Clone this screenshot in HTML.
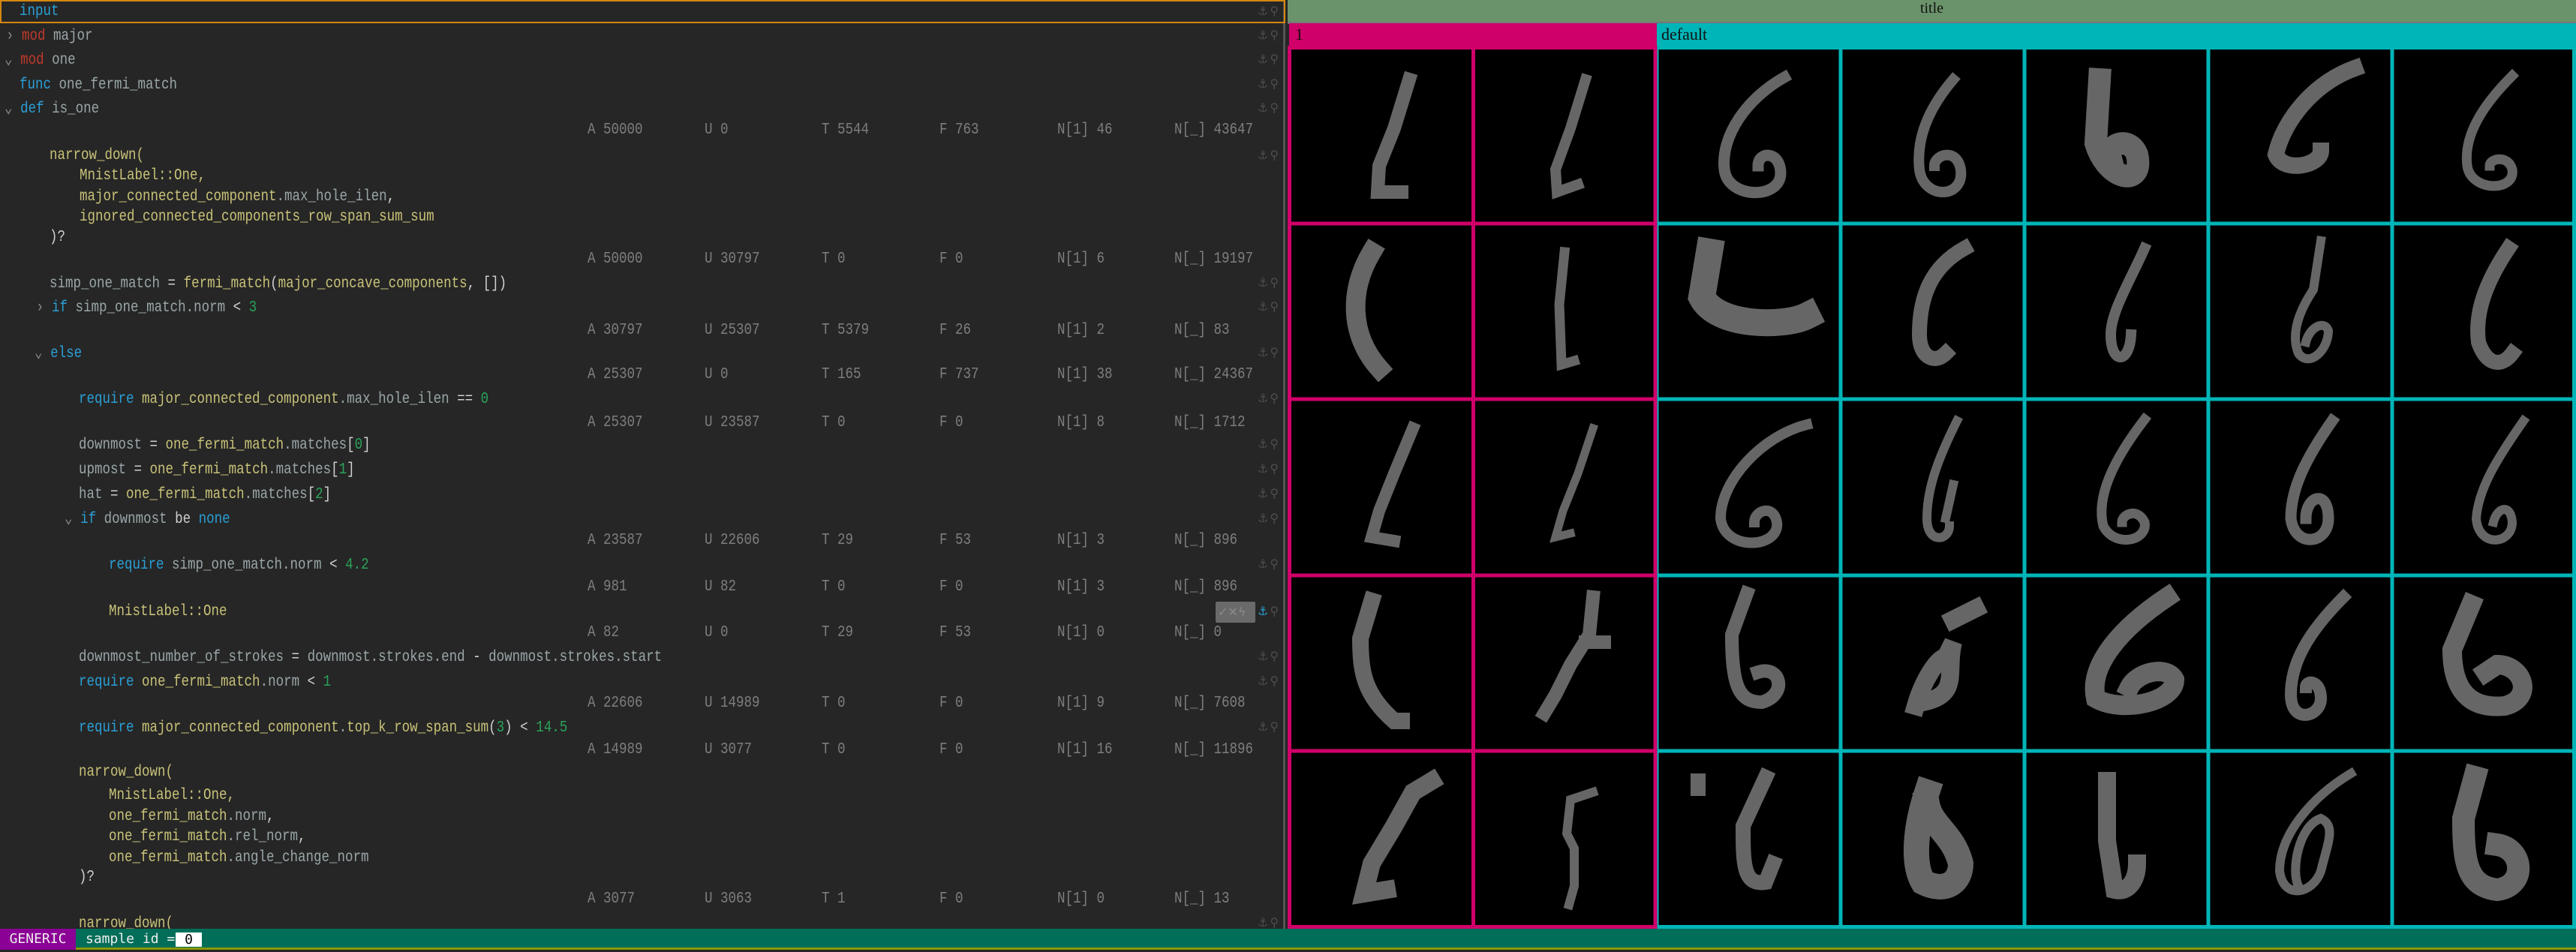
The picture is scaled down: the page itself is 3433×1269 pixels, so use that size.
<!DOCTYPE html>
<html><head><meta charset="utf-8"><style>
*{margin:0;padding:0;box-sizing:border-box}
body{width:3433px;height:1269px;background:#262626;position:relative;overflow:hidden;font-family:"Liberation Mono","DejaVu Sans Mono",monospace}
#left{position:absolute;left:0;top:0;width:1713px;height:1238px;background:#262626;border-right:3px solid #555}
.l{position:absolute;height:26px;line-height:26px;font-size:17.5px;white-space:pre;color:#9aa6a8;transform:scaleY(1.2);transform-origin:left center}
.k{color:#2a9fd6}.r{color:#c0392b}.y{color:#c8c278}.g{color:#2aa35a}.w{color:#d0d0d0}.ch{color:#8a8a8a}
.s{position:absolute;height:26px;line-height:26px;font-size:17.5px;color:#7e7e7e;white-space:pre;transform:scaleY(1.2)}
.ic{position:absolute;left:1676px;width:36px;height:22px;color:#4e4e4e;font-size:16px;line-height:22px;font-family:"DejaVu Sans",sans-serif;letter-spacing:2px}
#title{position:absolute;left:1716px;top:0;width:1717px;height:29px;background:#6b936b;text-align:center;font:20px "Liberation Serif",serif;line-height:22px;color:#111}
#bar{position:absolute;left:0;top:1238px;width:3433px;height:28px;background:#006e58;border-bottom:3px solid #8a9a00}
</style></head><body>
<div id="left">
<div style="position:absolute;left:0;top:0;width:1713px;height:31px;border:2px solid #d4880f"></div>
<div class="l k" style="left:26px;top:2px">input</div>
<div class="l" style="left:8px;top:35px"><span class="ch">›</span> <span class="r">mod</span> major</div>
<div class="l" style="left:6px;top:67px"><span class="ch">⌄</span> <span class="r">mod</span> one</div>
<div class="l" style="left:26px;top:100px"><span class="k">func</span> one_fermi_match</div>
<div class="l" style="left:6px;top:132px"><span class="ch">⌄</span> <span class="k">def</span> is_one</div>
<div class="l y" style="left:66px;top:194px">narrow_down(</div>
<div class="l y" style="left:106px;top:221px">MnistLabel::One,</div>
<div class="l y" style="left:106px;top:249px">major_connected_component<span style="color:#9aa6a8">.max_hole_ilen</span><span class="w">,</span></div>
<div class="l y" style="left:106px;top:276px">ignored_connected_components_row_span_sum_sum</div>
<div class="l w" style="left:66px;top:303px">)?</div>
<div class="l" style="left:66px;top:365px">simp_one_match <span class="w">=</span> <span class="y">fermi_match</span><span class="w">(</span><span class="y">major_concave_components</span><span class="w">, [])</span></div>
<div class="l" style="left:48px;top:397px"><span class="ch">›</span> <span class="k">if</span> simp_one_match.norm <span class="w">&lt;</span> <span class="g">3</span></div>
<div class="l" style="left:46px;top:458px"><span class="ch">⌄</span> <span class="k">else</span></div>
<div class="l" style="left:105px;top:519px"><span class="k">require</span> <span class="y">major_connected_component</span>.max_hole_ilen <span class="w">==</span> <span class="g">0</span></div>
<div class="l" style="left:105px;top:580px">downmost <span class="w">=</span> <span class="y">one_fermi_match</span>.matches<span class="w">[</span><span class="g">0</span><span class="w">]</span></div>
<div class="l" style="left:105px;top:613px">upmost <span class="w">=</span> <span class="y">one_fermi_match</span>.matches<span class="w">[</span><span class="g">1</span><span class="w">]</span></div>
<div class="l" style="left:105px;top:646px">hat <span class="w">=</span> <span class="y">one_fermi_match</span>.matches<span class="w">[</span><span class="g">2</span><span class="w">]</span></div>
<div class="l" style="left:86px;top:679px"><span class="ch">⌄</span> <span class="k">if</span> downmost <span class="w">be</span> <span class="k">none</span></div>
<div class="l" style="left:145px;top:740px"><span class="k">require</span> simp_one_match.norm <span class="w">&lt;</span> <span class="g">4.2</span></div>
<div class="l y" style="left:145px;top:802px">MnistLabel::One</div>
<div class="l" style="left:105px;top:863px">downmost_number_of_strokes <span class="w">=</span> downmost.strokes.end <span class="w">-</span> downmost.strokes.start</div>
<div class="l" style="left:105px;top:896px"><span class="k">require</span> <span class="y">one_fermi_match</span>.norm <span class="w">&lt;</span> <span class="g">1</span></div>
<div class="l" style="left:105px;top:957px"><span class="k">require</span> <span class="y">major_connected_component</span>.<span class="y">top_k_row_span_sum</span><span class="w">(</span><span class="g">3</span><span class="w">) &lt;</span> <span class="g">14.5</span></div>
<div class="l y" style="left:105px;top:1016px">narrow_down(</div>
<div class="l y" style="left:145px;top:1047px">MnistLabel::One,</div>
<div class="l" style="left:145px;top:1075px"><span class="y">one_fermi_match</span>.norm<span class="w">,</span></div>
<div class="l" style="left:145px;top:1102px"><span class="y">one_fermi_match</span>.rel_norm<span class="w">,</span></div>
<div class="l" style="left:145px;top:1130px"><span class="y">one_fermi_match</span>.angle_change_norm</div>
<div class="l w" style="left:105px;top:1156px">)?</div>
<div class="l y" style="left:105px;top:1218px">narrow_down(</div>

<div class="s" style="left:783px;top:160px">A 50000</div><div class="s" style="left:939px;top:160px">U 0</div><div class="s" style="left:1095px;top:160px">T 5544</div><div class="s" style="left:1252px;top:160px">F 763</div><div class="s" style="left:1409px;top:160px">N[1] 46</div><div class="s" style="left:1565px;top:160px">N[_] 43647</div>
<div class="s" style="left:783px;top:332px">A 50000</div><div class="s" style="left:939px;top:332px">U 30797</div><div class="s" style="left:1095px;top:332px">T 0</div><div class="s" style="left:1252px;top:332px">F 0</div><div class="s" style="left:1409px;top:332px">N[1] 6</div><div class="s" style="left:1565px;top:332px">N[_] 19197</div>
<div class="s" style="left:783px;top:427px">A 30797</div><div class="s" style="left:939px;top:427px">U 25307</div><div class="s" style="left:1095px;top:427px">T 5379</div><div class="s" style="left:1252px;top:427px">F 26</div><div class="s" style="left:1409px;top:427px">N[1] 2</div><div class="s" style="left:1565px;top:427px">N[_] 83</div>
<div class="s" style="left:783px;top:486px">A 25307</div><div class="s" style="left:939px;top:486px">U 0</div><div class="s" style="left:1095px;top:486px">T 165</div><div class="s" style="left:1252px;top:486px">F 737</div><div class="s" style="left:1409px;top:486px">N[1] 38</div><div class="s" style="left:1565px;top:486px">N[_] 24367</div>
<div class="s" style="left:783px;top:550px">A 25307</div><div class="s" style="left:939px;top:550px">U 23587</div><div class="s" style="left:1095px;top:550px">T 0</div><div class="s" style="left:1252px;top:550px">F 0</div><div class="s" style="left:1409px;top:550px">N[1] 8</div><div class="s" style="left:1565px;top:550px">N[_] 1712</div>
<div class="s" style="left:783px;top:707px">A 23587</div><div class="s" style="left:939px;top:707px">U 22606</div><div class="s" style="left:1095px;top:707px">T 29</div><div class="s" style="left:1252px;top:707px">F 53</div><div class="s" style="left:1409px;top:707px">N[1] 3</div><div class="s" style="left:1565px;top:707px">N[_] 896</div>
<div class="s" style="left:783px;top:769px">A 981</div><div class="s" style="left:939px;top:769px">U 82</div><div class="s" style="left:1095px;top:769px">T 0</div><div class="s" style="left:1252px;top:769px">F 0</div><div class="s" style="left:1409px;top:769px">N[1] 3</div><div class="s" style="left:1565px;top:769px">N[_] 896</div>
<div class="s" style="left:783px;top:830px">A 82</div><div class="s" style="left:939px;top:830px">U 0</div><div class="s" style="left:1095px;top:830px">T 29</div><div class="s" style="left:1252px;top:830px">F 53</div><div class="s" style="left:1409px;top:830px">N[1] 0</div><div class="s" style="left:1565px;top:830px">N[_] 0</div>
<div class="s" style="left:783px;top:924px">A 22606</div><div class="s" style="left:939px;top:924px">U 14989</div><div class="s" style="left:1095px;top:924px">T 0</div><div class="s" style="left:1252px;top:924px">F 0</div><div class="s" style="left:1409px;top:924px">N[1] 9</div><div class="s" style="left:1565px;top:924px">N[_] 7608</div>
<div class="s" style="left:783px;top:986px">A 14989</div><div class="s" style="left:939px;top:986px">U 3077</div><div class="s" style="left:1095px;top:986px">T 0</div><div class="s" style="left:1252px;top:986px">F 0</div><div class="s" style="left:1409px;top:986px">N[1] 16</div><div class="s" style="left:1565px;top:986px">N[_] 11896</div>
<div class="s" style="left:783px;top:1185px">A 3077</div><div class="s" style="left:939px;top:1185px">U 3063</div><div class="s" style="left:1095px;top:1185px">T 1</div><div class="s" style="left:1252px;top:1185px">F 0</div><div class="s" style="left:1409px;top:1185px">N[1] 0</div><div class="s" style="left:1565px;top:1185px">N[_] 13</div>

<div class="ic" style="top:4px">⚓⚲</div>
<div class="ic" style="top:36px">⚓⚲</div>
<div class="ic" style="top:68px">⚓⚲</div>
<div class="ic" style="top:101px">⚓⚲</div>
<div class="ic" style="top:133px">⚓⚲</div>
<div class="ic" style="top:196px">⚓⚲</div>
<div class="ic" style="top:366px">⚓⚲</div>
<div class="ic" style="top:398px">⚓⚲</div>
<div class="ic" style="top:459px">⚓⚲</div>
<div class="ic" style="top:520px">⚓⚲</div>
<div class="ic" style="top:581px">⚓⚲</div>
<div class="ic" style="top:614px">⚓⚲</div>
<div class="ic" style="top:647px">⚓⚲</div>
<div class="ic" style="top:680px">⚓⚲</div>
<div class="ic" style="top:741px">⚓⚲</div>
<div style="position:absolute;left:1620px;top:802px;width:53px;height:28px;background:#6a6a6a;border-radius:2px;color:#8a8a8a;font:16px 'DejaVu Sans',sans-serif;line-height:28px;padding-left:3px">✓✕ϟ</div>
<div class="ic" style="top:804px"><span style="color:#2a9fd6">⚓</span>⚲</div>
<div class="ic" style="top:864px">⚓⚲</div>
<div class="ic" style="top:897px">⚓⚲</div>
<div class="ic" style="top:958px">⚓⚲</div>
<div class="ic" style="top:1219px">⚓⚲</div>
</div>

<div id="title">title</div>
<div style="position:absolute;left:1716px;top:29px;width:1717px;height:3px;background:#777"></div>
<div style="position:absolute;left:1718px;top:31px;width:490px;height:30px;background:#d0006a;font:22px 'Liberation Serif',serif;line-height:30px;padding-left:8px;color:#111">1</div>
<div style="position:absolute;left:2208px;top:31px;width:1225px;height:30px;background:#00b5b8;font:22px 'Liberation Serif',serif;line-height:30px;padding-left:6px;color:#111">default</div>

<svg style="position:absolute;left:1716px;top:61px" width="1717" height="1177" viewBox="0 0 1717 1177">
<rect width="1717" height="1177" fill="#000"/>
<g fill="none" stroke="#666" stroke-linejoin="miter" stroke-linecap="square">
<g transform="translate(2,0)"><path d="M160 45 L140 110 L120 160 L118 195 L150 195" stroke-width="18"/></g>
<g transform="translate(247,0)"><path d="M150 45 L130 110 L110 165 L112 195 L140 185" stroke-width="14"/></g>
<g transform="translate(492,0)"><path d="M170 42 C120 70 85 120 90 165 C95 205 165 205 165 170 C165 140 135 140 135 160" stroke-width="15"/></g>
<g transform="translate(737,0)"><path d="M150 45 C120 80 100 120 105 165 C110 205 165 205 160 165 C155 135 125 145 125 160" stroke-width="14"/></g>
<g transform="translate(982,0)"><path d="M100 45 L95 130 C110 180 160 190 150 145 C140 120 110 130 115 150" stroke-width="30"/></g>
<g transform="translate(1227,0)"><path d="M195 30 C140 50 100 100 90 145 C100 170 150 160 150 140" stroke-width="22"/></g>
<g transform="translate(1472,0)"><path d="M160 40 C120 80 95 120 100 160 C105 195 165 195 160 165 C155 145 130 150 130 160" stroke-width="13"/></g>
<g transform="translate(2,235)"><path d="M110 40 C80 90 80 150 120 195" stroke-width="26"/></g>
<g transform="translate(247,235)"><path d="M122 40 L115 110 L118 190 L135 185" stroke-width="13"/></g>
<g transform="translate(492,235)"><path d="M70 40 L60 100 C80 140 170 140 200 125" stroke-width="36"/></g>
<g transform="translate(737,235)"><path d="M165 35 C120 60 105 100 105 150 C105 180 125 190 140 175" stroke-width="20"/></g>
<g transform="translate(982,235)"><path d="M160 35 C140 80 115 120 115 150 C115 190 140 190 142 150" stroke-width="14"/></g>
<g transform="translate(1227,235)"><path d="M150 25 L140 90 C120 120 110 150 120 175 C135 195 160 170 160 145 C155 130 135 140 130 160" stroke-width="12"/></g>
<g transform="translate(1472,235)"><path d="M155 35 C125 80 110 120 115 160 C125 190 145 195 160 175" stroke-width="20"/></g>
<g transform="translate(2,470)"><path d="M165 40 L140 100 L120 150 L110 185 L140 190" stroke-width="16"/></g>
<g transform="translate(247,470)"><path d="M160 40 L140 100 L120 150 L110 185 L130 180" stroke-width="11"/></g>
<g transform="translate(492,470)"><path d="M200 35 C140 50 85 110 85 160 C90 205 165 200 160 165 C155 140 130 150 130 165" stroke-width="14"/></g>
<g transform="translate(737,470)"><path d="M155 30 C130 80 115 120 115 160 C115 195 145 190 145 170 M140 160 L150 115" stroke-width="12"/></g>
<g transform="translate(982,470)"><path d="M160 28 C120 80 95 130 105 170 C120 200 165 190 160 165 C150 145 130 155 130 165" stroke-width="13"/></g>
<g transform="translate(1227,470)"><path d="M165 30 C130 80 110 120 110 160 C115 200 160 195 160 160 C160 120 130 130 130 160" stroke-width="15"/></g>
<g transform="translate(1472,470)"><path d="M175 30 C140 80 115 120 112 160 C115 200 160 195 160 165 C158 140 140 145 135 165" stroke-width="12"/></g>
<g transform="translate(2,705)"><path d="M110 35 L95 85 C95 130 100 160 140 195 L150 195" stroke-width="22"/></g>
<g transform="translate(247,705)"><path d="M160 30 L155 80 L130 120 L110 160 L95 185 M150 90 L175 90" stroke-width="18"/></g>
<g transform="translate(492,705)"><path d="M120 25 L100 80 C100 150 110 170 140 170 C175 160 165 120 135 130" stroke-width="18"/></g>
<g transform="translate(737,705)"><path d="M100 175 C110 140 130 110 140 110 L150 90 C140 130 160 160 110 170 M150 60 L180 45" stroke-width="24"/></g>
<g transform="translate(982,705)"><path d="M190 30 C130 70 85 120 95 165 C130 185 200 170 200 140 C190 120 150 130 140 150" stroke-width="26"/></g>
<g transform="translate(1227,705)"><path d="M180 30 C130 80 110 120 110 160 C110 200 150 190 150 165 C150 140 130 140 130 150" stroke-width="16"/></g>
<g transform="translate(1472,705)"><path d="M105 40 L80 100 C80 150 100 180 150 175 C190 165 175 120 140 120 L125 130" stroke-width="26"/></g>
<g transform="translate(2,940)"><path d="M190 40 L165 55 L140 100 L110 150 L100 190 L130 185" stroke-width="24"/></g>
<g transform="translate(247,940)"><path d="M160 55 L130 65 L125 110 L135 130 L135 180 L128 205" stroke-width="12"/></g>
<g transform="translate(492,940)"><path d="M145 35 L115 100 C115 150 115 180 145 175 L155 150 M55 40 L55 50" stroke-width="20"/></g>
<g transform="translate(737,940)"><path d="M115 55 C100 100 95 150 110 175 C140 190 160 175 160 150 C150 110 120 100 115 70" stroke-width="34"/></g>
<g transform="translate(982,940)"><path d="M110 40 L110 120 L120 185 C140 190 150 170 150 150" stroke-width="24"/></g>
<g transform="translate(1227,940)"><path d="M190 30 C140 60 95 110 95 160 C100 200 140 190 150 160 C160 120 170 100 150 90 C120 100 110 160 120 180" stroke-width="12"/></g>
<g transform="translate(1472,940)"><path d="M110 35 L95 90 C95 150 100 180 140 185 C180 180 175 130 140 125" stroke-width="30"/></g>
</g>
<g fill="none" stroke-width="5">
<path d="M2.5 0V1177M247.5 0V1177M2 2.5H490M2 237H490M2 471H490M2 706H490M2 940H490M2 1174.5H490" stroke="#d0006a"/>
<path d="M492 0V1177M737 0V1177M982 0V1177M1227 0V1177M1472 0V1177M1714.5 0V1177M492 2.5H1717M492 237H1717M492 471H1717M492 706H1717M492 940H1717M492 1174.5H1717" stroke="#00b5b8"/>
<path d="M490 0V1177" stroke="#d0006a"/>
</g>
</svg>

<div id="bar">
<div style="position:absolute;left:0;top:0;width:101px;height:28px;background:#8b0095;color:#eee;font:18px 'DejaVu Sans Mono',monospace;line-height:28px;text-align:center">GENERIC</div>
<div style="position:absolute;left:114px;top:0;height:28px;color:#eee;font:18px 'DejaVu Sans Mono',monospace;line-height:28px">sample id =</div>
<div style="position:absolute;left:234px;top:5px;width:35px;height:19px;background:#fff;color:#000;font:18px 'DejaVu Sans Mono',monospace;line-height:19px;text-align:center">0</div>
</div>
</body></html>
